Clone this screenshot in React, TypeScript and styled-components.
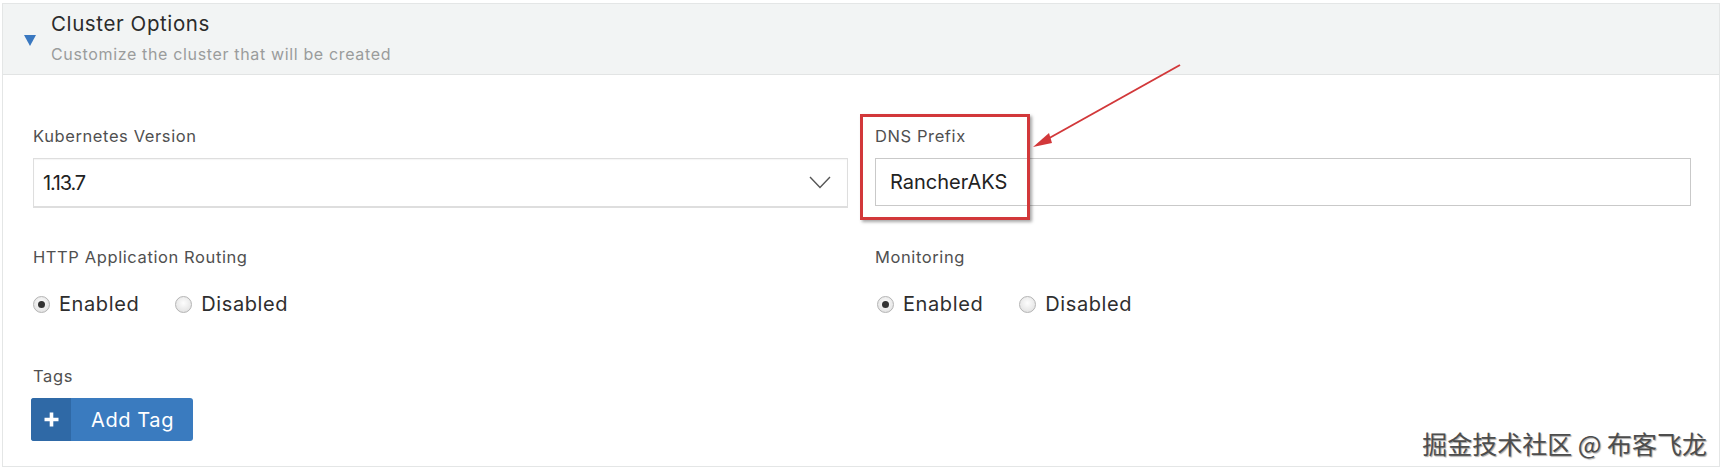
import styled, { createGlobalStyle } from "styled-components";

const GlobalStyle = createGlobalStyle`
  body {
    margin: 0;
    background: #ffffff;
    font-family: Inter, "Open Sans", "Noto Sans", sans-serif;
    color: #333;
  }
`;

type RadioOption = { label: string; checked?: boolean };

const RadioGroup = ({ options, indent = 0 }: { options: RadioOption[]; indent?: number }) => (
  <RadioRow $indent={indent}>
    {options.map((o) => (
      <RadioLabel key={o.label}>
        <RadioDot $checked={!!o.checked} />
        {o.label}
      </RadioLabel>
    ))}
  </RadioRow>
);

export default function App() {
  return (
    <>
      <GlobalStyle />
      <Panel>
        <Header>
          <Caret />
          <HeaderText>
            <Title>Cluster Options</Title>
            <Subtitle>Customize the cluster that will be created</Subtitle>
          </HeaderText>
        </Header>

        <Body>
          <Grid>
            <Field>
              <Label>Kubernetes Version</Label>
              <Select>
                <SelectValue>1.13.7</SelectValue>
                <svg width="22" height="13" viewBox="0 0 22 13">
                  <path d="M1 1 L11 11.5 L21 1" fill="none" stroke="#555" strokeWidth="1.4" />
                </svg>
              </Select>
            </Field>

            <Field>
              <Label>DNS Prefix</Label>
              <TextInput>RancherAKS</TextInput>
              <Callout />
              <Pointer width="160" height="90" viewBox="0 0 160 90">
                <line x1="150" y1="2" x2="14" y2="78" stroke="#d2383a" strokeWidth="2" />
                <polygon points="3,84 19,70 22,80" fill="#d2383a" />
              </Pointer>
            </Field>

            <Field>
              <Label>HTTP Application Routing</Label>
              <RadioGroup options={[{ label: "Enabled", checked: true }, { label: "Disabled" }]} />
            </Field>

            <Field>
              <Label>Monitoring</Label>
              <RadioGroup indent={2} options={[{ label: "Enabled", checked: true }, { label: "Disabled" }]} />
            </Field>
          </Grid>

          <TagsField>
            <Label>Tags</Label>
            <AddButton>
              <PlusIcon>
                <svg width="17" height="17" viewBox="0 0 17 17">
                  <path d="M8.5 1.5 V15.5 M1.5 8.5 H15.5" stroke="#fff" strokeWidth="3.6" />
                </svg>
              </PlusIcon>
              <ButtonText>Add Tag</ButtonText>
            </AddButton>
          </TagsField>
        </Body>

        <Watermark>掘金技术社区 @ 布客飞龙</Watermark>
      </Panel>
    </>
  );
}

const Panel = styled.section`
  position: relative;
  margin: 3px 0 0 2px;
  width: 1718px;
  box-sizing: border-box;
  border: 1px solid #e4e6e6;
  background: #fff;
`;

const Header = styled.div`
  display: flex;
  align-items: center;
  gap: 15px;
  height: 71px;
  box-sizing: border-box;
  padding: 0 0 0 21px;
  background: #f2f4f4;
  border-bottom: 1px solid #e2e4e4;
`;

const Caret = styled.span`
  width: 0;
  height: 0;
  margin-top: 2px;
  border-left: 6.5px solid transparent;
  border-right: 6.5px solid transparent;
  border-top: 11px solid #3a78c0;
`;

const HeaderText = styled.div`
  display: flex;
  flex-direction: column;
  gap: 7px;
  margin-top: -3px;
`;

const Title = styled.div`
  font-size: 20.5px;
  line-height: 26px;
  color: #2b2b2b;
  letter-spacing: 0.6px;
`;

const Subtitle = styled.div`
  font-size: 16px;
  line-height: 20px;
  color: #9a9c9c;
  letter-spacing: 0.65px;
`;

const Body = styled.div`
  padding: 51px 29px 25px 30px;
`;

const Grid = styled.div`
  display: grid;
  grid-template-columns: 815px 816px;
  column-gap: 27px;
  row-gap: 39px;
`;

const Field = styled.div`
  position: relative;
  display: flex;
  flex-direction: column;
`;

const TagsField = styled(Field)`
  margin-top: 50px;
`;

const Label = styled.div`
  font-size: 16.5px;
  line-height: 20px;
  color: #505050;
  margin-bottom: 12px;
  letter-spacing: 0.6px;
`;

const Select = styled.div`
  display: flex;
  align-items: center;
  justify-content: space-between;
  height: 50px;
  box-sizing: border-box;
  padding: 0 16px 0 9px;
  border: 1px solid #dedede;
  border-bottom-width: 2px;
  box-shadow: inset 0 1px 1px rgba(0, 0, 0, 0.04);
`;

const SelectValue = styled.span`
  font-size: 20px;
  color: #222;
  letter-spacing: -1.2px;
`;

const TextInput = styled.div`
  display: flex;
  align-items: center;
  height: 48px;
  box-sizing: border-box;
  padding: 0 14px;
  border: 1px solid #c9c9c9;
  font-size: 20px;
  color: #222;
`;

const Callout = styled.div`
  position: absolute;
  left: -15px;
  top: -12px;
  width: 170px;
  height: 106px;
  box-sizing: border-box;
  border: 3px solid #d2383a;
  box-shadow: 2px 2px 3px rgba(0, 0, 0, 0.35);
  pointer-events: none;
`;

const Pointer = styled.svg`
  position: absolute;
  left: 155px;
  top: -63px;
  overflow: visible;
  pointer-events: none;
`;

const RadioRow = styled.div<{ $indent: number }>`
  display: flex;
  align-items: center;
  gap: 36px;
  height: 24px;
  padding-left: ${(p) => p.$indent}px;
  margin-top: 13px;
`;

const RadioLabel = styled.label`
  display: flex;
  align-items: center;
  gap: 9px;
  font-size: 20px;
  color: #2e2e2e;
  letter-spacing: 0.6px;
`;

const RadioDot = styled.span<{ $checked: boolean }>`
  position: relative;
  width: 17px;
  height: 17px;
  box-sizing: border-box;
  border-radius: 50%;
  border: 1px solid #b4b4b4;
  background: radial-gradient(circle at 50% 40%, #fdfdfd 0%, #e6e6e6 70%, #d2d2d2 100%);

  &::after {
    content: "";
    display: ${(p) => (p.$checked ? "block" : "none")};
    position: absolute;
    left: 50%;
    top: 50%;
    width: 7px;
    height: 7px;
    margin: -3.5px 0 0 -3.5px;
    border-radius: 50%;
    background: #333;
  }
`;

const AddButton = styled.button`
  display: flex;
  align-items: stretch;
  align-self: flex-start;
  height: 43px;
  padding: 0;
  margin-left: -2px;
  border: none;
  border-radius: 3px;
  overflow: hidden;
  background: #3a7bbf;
  color: #fff;
  cursor: pointer;
`;

const PlusIcon = styled.span`
  display: flex;
  align-items: center;
  justify-content: center;
  width: 40px;
  background: #2f69a6;
`;

const ButtonText = styled.span`
  display: flex;
  align-items: center;
  padding: 0 19px 0 20px;
  font-family: Inter, "Open Sans", sans-serif;
  font-size: 20px;
  letter-spacing: 0.6px;
`;

const Watermark = styled.div`
  position: absolute;
  right: 12px;
  bottom: 9px;
  font-family: "Noto Sans CJK SC", "Noto Sans", sans-serif;
  font-size: 25px;
  line-height: 28px;
  color: #4d4d4d;
  text-shadow: 1px 1px 1px rgba(0, 0, 0, 0.35), -1px -1px 0 #fff;
`;
